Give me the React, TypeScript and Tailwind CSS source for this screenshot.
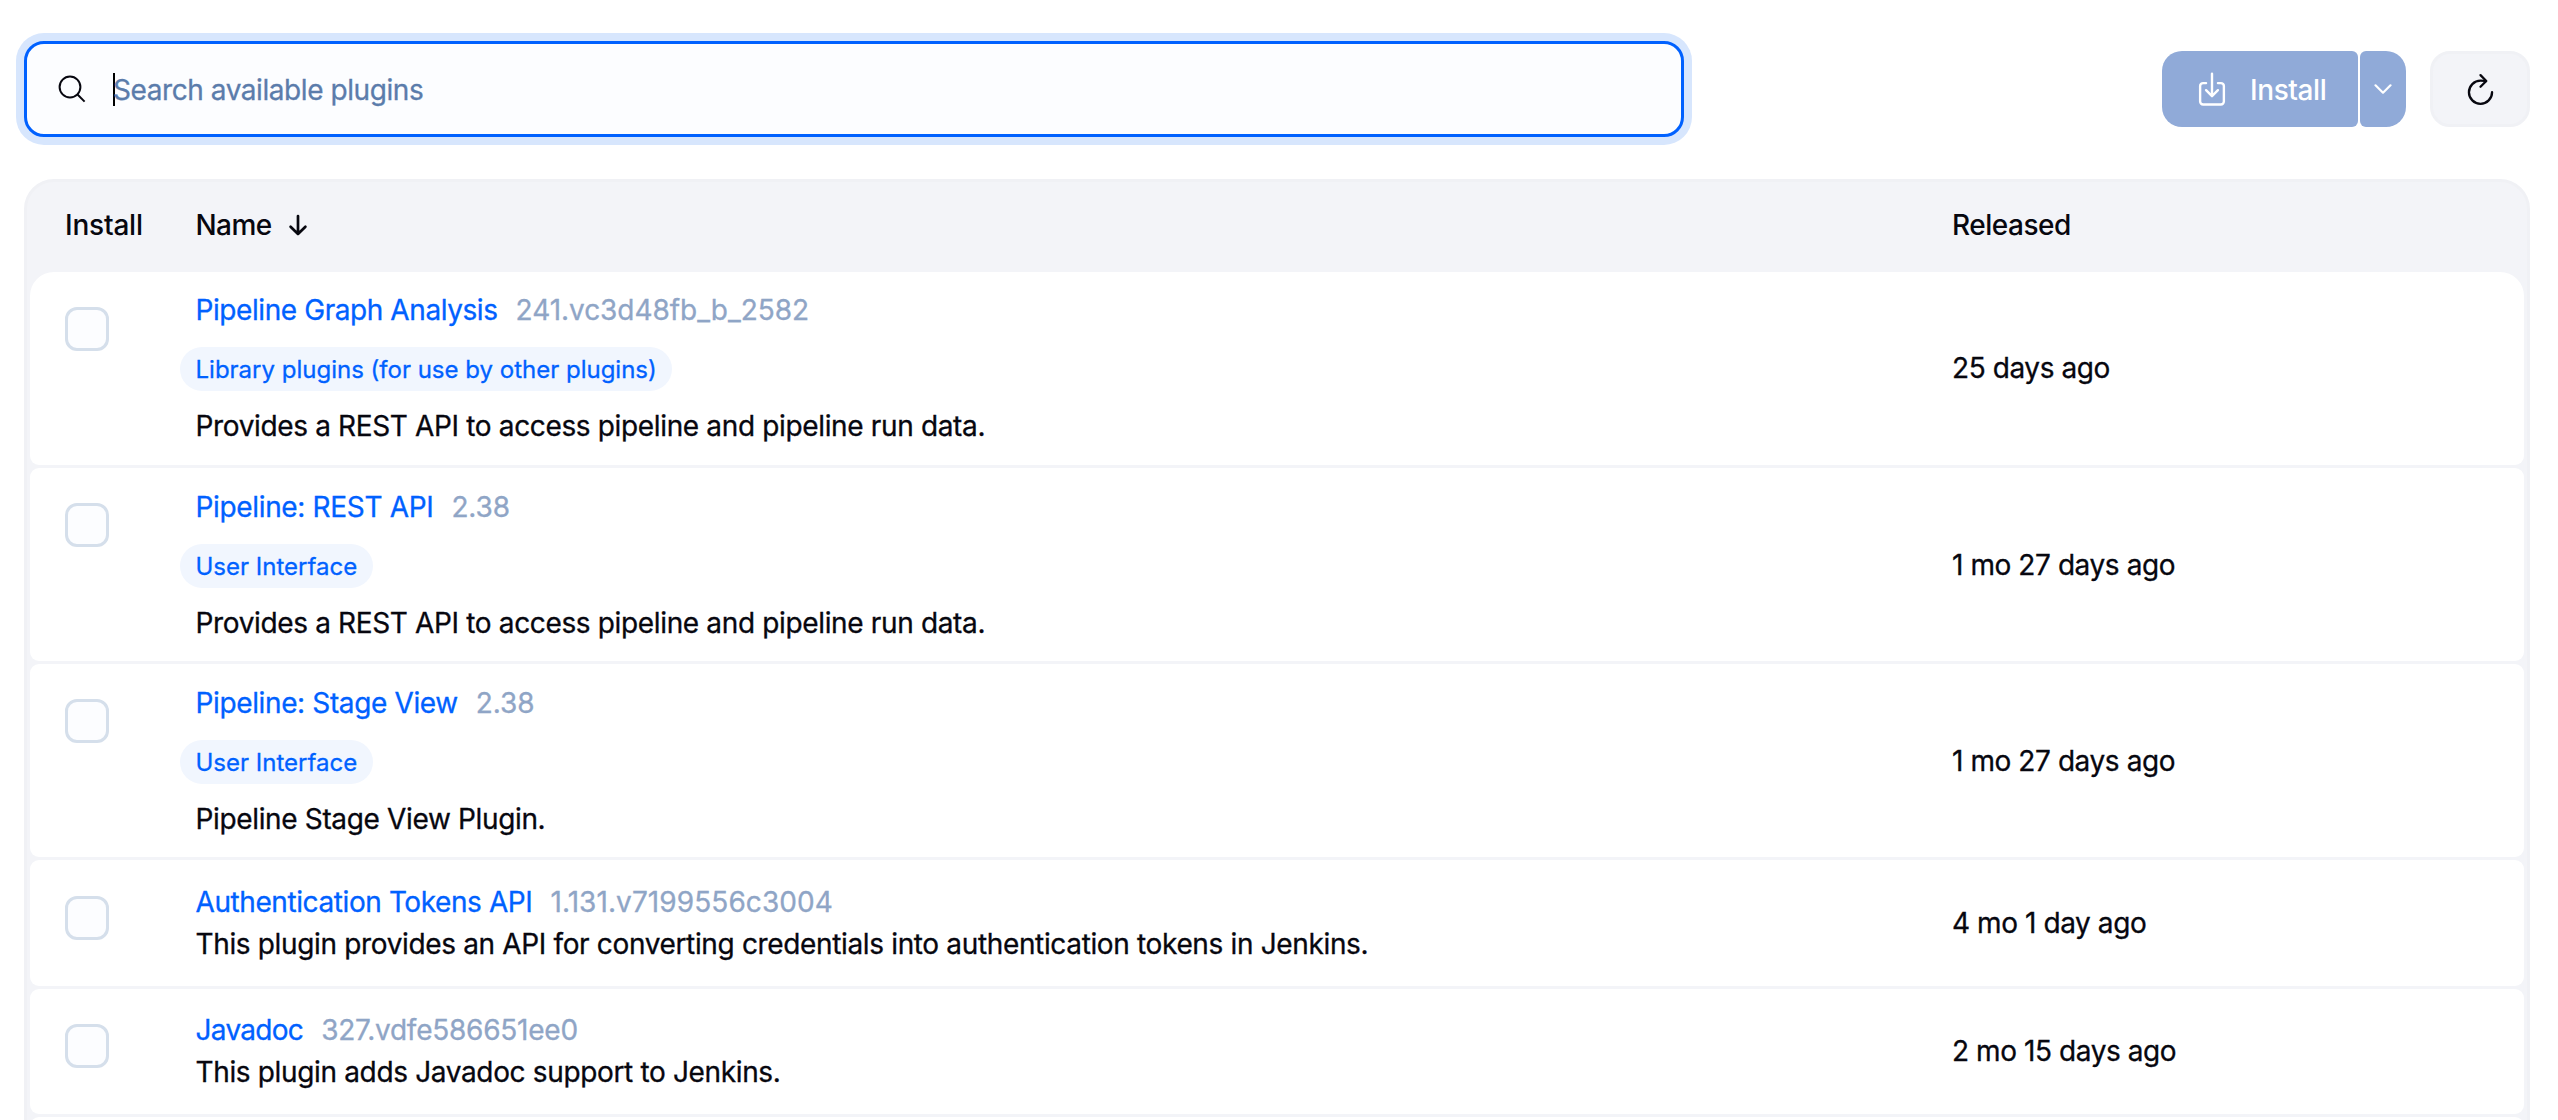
type Plugin = {
  name: string;
  version: string;
  label?: string;
  description: string;
  released: string;
  row: string;
  checkbox: string;
  nameSpacing: string;
  versionSpacing: string;
};

const plugins: Plugin[] = [
  {
    name: "Pipeline Graph Analysis",
    version: "241.vc3d48fb_b_2582",
    label: "Library plugins (for use by other plugins)",
    description: "Provides a REST API to access pipeline and pipeline run data.",
    released: "25 days ago",
    row: "h-[193px] rounded-t-[24px] *:pb-px",
    checkbox: "mt-[35px]",
    nameSpacing: "tracking-[-0.42px]",
    versionSpacing: "tracking-[-0.05px]",
  },
  {
    name: "Pipeline: REST API",
    version: "2.38",
    label: "User Interface",
    description: "Provides a REST API to access pipeline and pipeline run data.",
    released: "1 mo 27 days ago",
    row: "h-[193px] rounded-t-[9px] *:pt-px",
    checkbox: "mt-[34px]",
    nameSpacing: "tracking-[-0.34px]",
    versionSpacing: "tracking-[-0.1px]",
  },
  {
    name: "Pipeline: Stage View",
    version: "2.38",
    label: "User Interface",
    description: "Pipeline Stage View Plugin.",
    released: "1 mo 27 days ago",
    row: "h-[193px] rounded-t-[9px] *:pt-px",
    checkbox: "mt-[34px]",
    nameSpacing: "tracking-[-0.37px]",
    versionSpacing: "tracking-[-0.1px]",
  },
  {
    name: "Authentication Tokens API",
    version: "1.131.v7199556c3004",
    description:
      "This plugin provides an API for converting credentials into authentication tokens in Jenkins.",
    released: "4 mo 1 day ago",
    row: "h-[126px] rounded-t-[9px]",
    checkbox: "mt-[36px]",
    nameSpacing: "tracking-[-0.41px]",
    versionSpacing: "tracking-[0.08px]",
  },
  {
    name: "Javadoc",
    version: "327.vdfe586651ee0",
    description: "This plugin adds Javadoc support to Jenkins.",
    released: "2 mo 15 days ago",
    row: "h-[125px] rounded-t-[9px] *:pb-px",
    checkbox: "mt-[35px]",
    nameSpacing: "tracking-[-0.7px]",
    versionSpacing: "tracking-[-0.24px]",
  },
];

function SearchIcon() {
  return (
    <svg className="size-[28px]" viewBox="0 0 28 28" fill="none" stroke="#07070f" strokeWidth="2">
      <circle cx="12" cy="12" r="10.4" />
      <path d="M19.5 19.5 26.6 26.6" />
    </svg>
  );
}

function DownloadIcon() {
  return (
    <svg
      className="size-[38px]"
      viewBox="0 0 512 512"
      fill="none"
      stroke="currentColor"
      strokeWidth="32"
      strokeLinecap="round"
      strokeLinejoin="round"
    >
      <path d="M336 176h40a40 40 0 0 1 40 40v208a40 40 0 0 1-40 40H136a40 40 0 0 1-40-40V216a40 40 0 0 1 40-40h40" />
      <path d="m176 272 80 80 80-80M256 48v288" />
    </svg>
  );
}

function ChevronIcon() {
  return (
    <svg
      className="h-[10px] w-[18px]"
      viewBox="0 0 18 10"
      fill="none"
      stroke="currentColor"
      strokeWidth="2.2"
      strokeLinecap="round"
      strokeLinejoin="round"
    >
      <path d="m1.5 1.3 7.5 7.4 7.5-7.4" />
    </svg>
  );
}

function RefreshIcon() {
  return (
    <svg
      className="size-[37px]"
      viewBox="0 0 512 512"
      fill="none"
      stroke="#07070f"
      strokeWidth="32"
      strokeLinecap="round"
    >
      <path strokeMiterlimit="10" d="M320 146s24.36-12-64-12a160 160 0 1 0 160 160" />
      <path strokeLinejoin="round" d="m256 58 80 80-80 80" />
    </svg>
  );
}

function ArrowDownIcon() {
  return (
    <svg
      className="h-[22px] w-[20px]"
      viewBox="0 0 20 22"
      fill="none"
      stroke="#07070f"
      strokeWidth="2.7"
      strokeLinecap="round"
      strokeLinejoin="round"
    >
      <path d="M10 2v18M2.6 12.8 10 20l7.4-7.2" />
    </svg>
  );
}

function Row({ plugin }: { plugin: Plugin }) {
  return (
    <div className={`flex shrink-0 rounded-b-[9px] bg-white ${plugin.row}`}>
      <div className="w-[165.5px] shrink-0 pl-[35px]">
        <div
          className={`size-[44px] rounded-[12px] border-[3px] border-[#d5dfeb] bg-[#fcfdff] ${plugin.checkbox}`}
        />
      </div>
      <div className="flex w-[1756.5px] shrink-0 flex-col items-start justify-center leading-[42px]">
        <div className="flex gap-[18px]">
          <a className={`text-[#0061ff] ${plugin.nameSpacing}`}>{plugin.name}</a>
          <span className={`text-[#8fa5c6] ${plugin.versionSpacing}`}>{plugin.version}</span>
        </div>
        {plugin.label && (
          <div className="mt-4 mb-3.5 -ml-[15.5px] h-[44px] rounded-full bg-[#f1f6fe] pt-px pr-[15.5px] pl-[15.5px] text-[24px] leading-[44px] text-[#0061ff]">
            {plugin.label}
          </div>
        )}
        <div className="tracking-[-0.35px]">{plugin.description}</div>
      </div>
      <div className="flex items-center tracking-[-0.42px]">{plugin.released}</div>
    </div>
  );
}

export default function App() {
  return (
    <div className="flex h-[1120px] w-[2558px] flex-col overflow-hidden bg-white px-6 pt-[41px] font-['Inter',sans-serif] text-[28px] text-[#07070f] [-webkit-text-stroke-width:0.3px]">
      <div className="flex h-24 w-[2506px] shrink-0 items-center">
        <div className="flex h-24 w-[1660px] items-center rounded-[20px] border-[3px] border-[#0061ff] bg-[#fcfdff] pl-[31px] ring-8 ring-[#d7e6fd]">
          <SearchIcon />
          <div className="ml-[27px] h-[33px] w-0.5 bg-black" />
          <span className="-ml-0.5 pt-0.5 tracking-[-0.43px] text-[#5b7cab]">
            Search available plugins
          </span>
        </div>
        <div className="ml-auto flex h-[76px] gap-0.5 text-white">
          <div className="flex w-[196px] items-center rounded-l-[20px] rounded-r-[6px] bg-[#90aad8] pl-[31px]">
            <DownloadIcon />
            <span className="ml-[19px] pt-0.5 font-medium tracking-[-0.4px] [-webkit-text-stroke-width:0px]">
              Install
            </span>
          </div>
          <div className="flex w-[46px] items-center justify-center rounded-l-[6px] rounded-r-[20px] bg-[#90aad8]">
            <ChevronIcon />
          </div>
        </div>
        <div className="ml-6 flex h-[76px] w-[100px] items-center justify-center rounded-[20px] border-[3px] border-[#f0f1f5] bg-[#f3f4f8]">
          <RefreshIcon />
        </div>
      </div>

      <div className="mt-[42px] flex h-[1000px] w-[2506px] shrink-0 flex-col rounded-t-[30px] border-[3px] border-[#f0f1f5] bg-[#f3f4f8] px-[3px]">
        <div className="flex h-[90px] shrink-0 items-center pb-1 font-medium [-webkit-text-stroke-width:0px]">
          <div className="w-[165.5px] pl-[35px] tracking-[-0.2px]">Install</div>
          <div className="flex w-[1756.5px] items-center gap-4">
            <span className="tracking-[-0.6px]">Name</span>
            <ArrowDownIcon />
          </div>
          <div className="tracking-[-0.5px]">Released</div>
        </div>
        <div className="flex flex-col gap-[3px]">
          {plugins.map((plugin) => (
            <Row key={plugin.name} plugin={plugin} />
          ))}
          <div className="h-[125px] shrink-0 rounded-t-[9px] bg-white" />
        </div>
      </div>
    </div>
  );
}
